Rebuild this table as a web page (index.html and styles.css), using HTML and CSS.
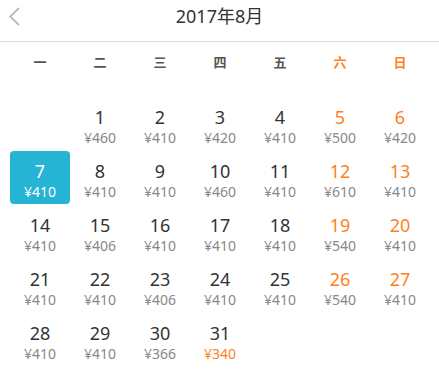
FILE: index.html
```html
<!DOCTYPE html>
<html lang="zh">
<head>
<meta charset="utf-8">
<link rel="stylesheet" href="styles.css">
</head>
<body>
<div class="header">
  <svg class="back" width="13" height="19" viewBox="0 0 13 19"><path d="M11 1 L2.2 9.5 L11 18" fill="none" stroke="#b4bcc6" stroke-width="1.8"/></svg>
  <div class="title">2017年8月</div>
</div>
<div class="week">
  <span>一</span><span>二</span><span>三</span><span>四</span><span>五</span><span class="we">六</span><span class="we">日</span>
</div>
<div class="grid">
  <div class="cell"></div>
  <div class="cell"><b>1</b><i>¥460</i></div>
  <div class="cell"><b>2</b><i>¥410</i></div>
  <div class="cell"><b>3</b><i>¥420</i></div>
  <div class="cell"><b>4</b><i>¥410</i></div>
  <div class="cell we"><b>5</b><i>¥500</i></div>
  <div class="cell we"><b>6</b><i>¥420</i></div>
  <div class="cell sel"><b>7</b><i>¥410</i></div>
  <div class="cell"><b>8</b><i>¥410</i></div>
  <div class="cell"><b>9</b><i>¥410</i></div>
  <div class="cell"><b>10</b><i>¥460</i></div>
  <div class="cell"><b>11</b><i>¥410</i></div>
  <div class="cell we"><b>12</b><i>¥610</i></div>
  <div class="cell we"><b>13</b><i>¥410</i></div>
  <div class="cell"><b>14</b><i>¥410</i></div>
  <div class="cell"><b>15</b><i>¥406</i></div>
  <div class="cell"><b>16</b><i>¥410</i></div>
  <div class="cell"><b>17</b><i>¥410</i></div>
  <div class="cell"><b>18</b><i>¥410</i></div>
  <div class="cell we"><b>19</b><i>¥540</i></div>
  <div class="cell we"><b>20</b><i>¥410</i></div>
  <div class="cell"><b>21</b><i>¥410</i></div>
  <div class="cell"><b>22</b><i>¥410</i></div>
  <div class="cell"><b>23</b><i>¥406</i></div>
  <div class="cell"><b>24</b><i>¥410</i></div>
  <div class="cell"><b>25</b><i>¥410</i></div>
  <div class="cell we"><b>26</b><i>¥540</i></div>
  <div class="cell we"><b>27</b><i>¥410</i></div>
  <div class="cell"><b>28</b><i>¥410</i></div>
  <div class="cell"><b>29</b><i>¥410</i></div>
  <div class="cell"><b>30</b><i>¥366</i></div>
  <div class="cell low"><b>31</b><i>¥340</i></div>
</div>
</body>
</html>
```
FILE: styles.css
```css
* { box-sizing: border-box; }
body {
  margin: 0;
  background: #fff;
  font-family: "Noto Sans", "Noto Sans CJK SC", sans-serif;
  color: #333;
}
.header {
  position: relative;
  height: 42px;
  border-bottom: 1px solid #dcdcdc;
  display: flex;
  justify-content: center;
}
.back {
  position: absolute;
  left: 8px;
  top: 7px;
}
.title {
  font-size: 18px;
  color: #333;
  line-height: 24px;
  margin-top: 4px;
}
.week {
  display: grid;
  grid-template-columns: repeat(7, 60px);
  padding: 0 10px;
  height: 40px;
  line-height: 40px;
  margin-bottom: 15px;
  font-size: 13px;
  font-weight: 700;
  color: #555;
  text-align: center;
}
.week .we { color: #ff7f1a; }
.grid {
  display: grid;
  grid-template-columns: repeat(7, 60px);
  grid-auto-rows: 53px;
  row-gap: 1px;
  padding: 0 10px;
}
.cell {
  display: flex;
  flex-direction: column;
  align-items: center;
  padding-top: 9px;
  border-radius: 4px;
}
.cell b {
  font-weight: 400;
  font-size: 18px;
  line-height: 22px;
  color: #333;
}
.cell i {
  font-style: normal;
  font-size: 14px;
  line-height: 20px;
  color: #888;
}
.cell.we b { color: #ff7f1a; }
.cell.low i { color: #ff7f1a; }
.cell.sel { background: #25b4d3; }
.cell.sel b, .cell.sel i { color: #fff; }
```
